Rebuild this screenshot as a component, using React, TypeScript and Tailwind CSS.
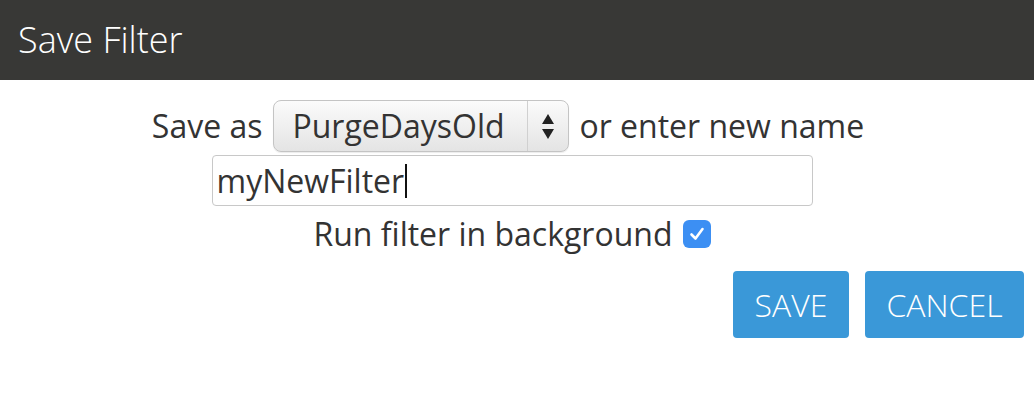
import { useState } from "react";

export default function App() {
    const [runInBackground, setRunInBackground] = useState(true);

    return (
        <div className="w-[1034px] h-[408px] bg-white font-['Open_Sans',sans-serif] text-[#333333]">
            <div className="h-[80px] bg-[#383836] flex items-center px-[18px]">
                <h1 className="text-white font-light text-[36px] leading-none">Save Filter</h1>
            </div>

            <div className="flex flex-col items-center pt-[20px] pr-[10px]">
                <div className="flex items-center text-[32px] leading-none pr-[8px]">
                    <span>Save as</span>
                    <div className="ml-[11px] w-[296px] h-[52px] flex rounded-[8px] border border-[#c4c4c4] bg-gradient-to-b from-[#fbfbfb] to-[#e4e4e4] shadow-[0_1px_1px_rgba(0,0,0,0.08)]">
                        <div className="flex-1 flex items-center pl-[18px]">PurgeDaysOld</div>
                        <div className="w-[41px] border-l border-[#d0d0d0] flex flex-col items-center justify-center gap-[5px]">
                            <svg width="12" height="10" viewBox="0 0 12 10">
                                <path d="M6 0 L12 10 L0 10 Z" fill="#222" />
                            </svg>
                            <svg width="12" height="10" viewBox="0 0 12 10">
                                <path d="M0 0 L12 0 L6 10 Z" fill="#222" />
                            </svg>
                        </div>
                    </div>
                    <span className="ml-[10px]">or enter new name</span>
                </div>

                <div className="mt-[3px] w-[601px] h-[51px] border border-[#c8c8c8] rounded-[4px] flex items-center pl-[4px] text-[32px] leading-none">
                    <span>myNewFilter</span>
                    <span className="w-[2px] h-[34px] bg-[#111] ml-[1px]" />
                </div>

                <label className="mt-[12px] flex items-center text-[32px] leading-none cursor-pointer">
                    <span>Run filter in background</span>
                    <button
                        type="button"
                        onClick={() => setRunInBackground(!runInBackground)}
                        className="ml-[10px] w-[28px] h-[28px] rounded-[6px] bg-[#3c8ff3] flex items-center justify-center"
                    >
                        {runInBackground && (
                            <svg width="18" height="18" viewBox="0 0 18 18" fill="none">
                                <path d="M3.5 9.5 L7.5 13.5 L14.5 4" stroke="white" strokeWidth="2.6" strokeLinecap="round" strokeLinejoin="round" />
                            </svg>
                        )}
                    </button>
                </label>
            </div>

            <div className="flex justify-end gap-[16px] pr-[10px] mt-[21px]">
                <button className="w-[116px] h-[67px] rounded-[4px] bg-[#3a98d8] text-white font-light text-[32px] uppercase">
                    Save
                </button>
                <button className="w-[159px] h-[67px] rounded-[4px] bg-[#3a98d8] text-white font-light text-[32px] uppercase">
                    Cancel
                </button>
            </div>
        </div>
    );
}
